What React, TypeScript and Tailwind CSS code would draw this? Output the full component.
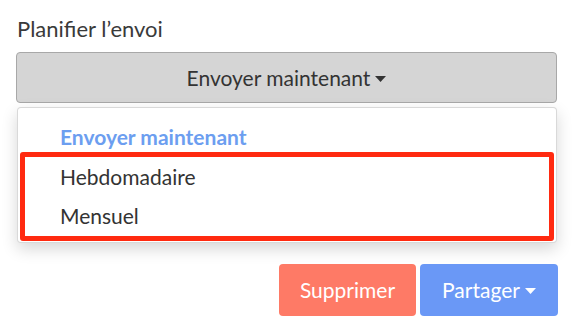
import React from "react";

function Caret({ className }: { className?: string }) {
  return (
    <svg width="11" height="6" viewBox="0 0 11 6" className={className}>
      <path d="M0 0 L11 0 L5.5 6 Z" fill="currentColor" />
    </svg>
  );
}

export default function App() {
  return (
    <div
      className="w-[584px] h-[334px] bg-white overflow-hidden"
      style={{ fontFamily: "Lato, 'Noto Sans', sans-serif" }}
    >
      <div className="pl-[16px] pr-[27px] pt-[16px]">
        <div className="pl-[1px] text-[22px] leading-[26px] text-[#3a3a3a]">Planifier l’envoi</div>
        <button className="mt-[10px] w-full h-[51px] rounded-[4px] border border-[#a8a8a8] bg-[#d5d5d5] flex items-center justify-center gap-[5px] text-[21px] text-[#333]">
          <span>Envoyer maintenant</span>
          <Caret className="text-[#333] mt-[2px]" />
        </button>
        <div className="relative mt-[4px] ml-[1px] h-[136px] rounded-[4px] border border-black/15 bg-white shadow-[0_6px_16px_rgba(0,0,0,0.16)] pt-[9px]">
          <div className="h-[40px] flex items-center pl-[42px] text-[21px] font-bold text-[#6c9ef0]">
            Envoyer maintenant
          </div>
          <div className="h-[39px] flex items-center pl-[42px] text-[21px] text-[#333]">Hebdomadaire</div>
          <div className="h-[39px] flex items-center pl-[42px] text-[21px] text-[#333]">Mensuel</div>
          <div className="absolute left-[2px] right-[2px] top-[44px] bottom-[1px] border-[5px] border-[#ff2a10] rounded-[3px]" />
        </div>
      </div>
      <div className="mt-[21px] flex justify-end gap-[4px] pr-[26px]">
        <button className="w-[137px] h-[52px] rounded-[4px] bg-[#fe7a66] text-white text-[21px] flex items-center justify-center">
          Supprimer
        </button>
        <button className="w-[138px] h-[52px] rounded-[4px] bg-[#6a98f6] text-white text-[21px] flex items-center justify-center gap-[5px]">
          <span>Partager</span>
          <Caret className="mt-[2px]" />
        </button>
      </div>
    </div>
  );
}
